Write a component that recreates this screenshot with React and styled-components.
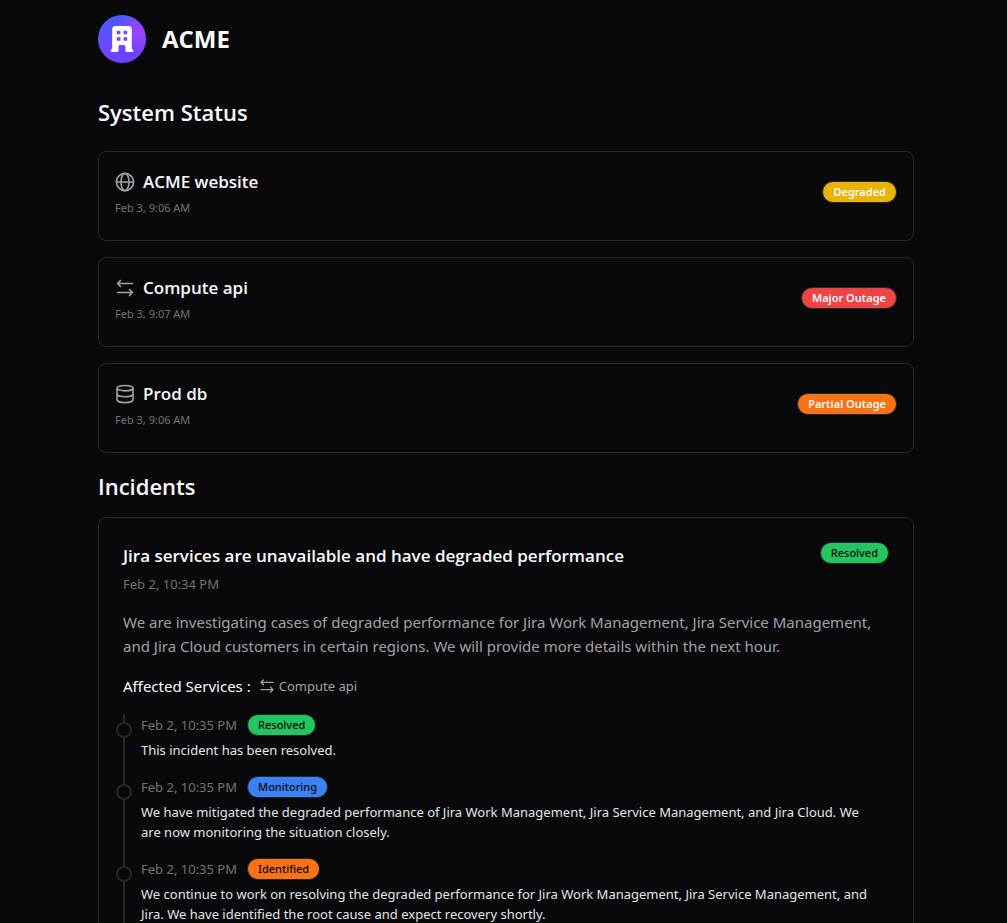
import React from "react";
import styled, { createGlobalStyle } from "styled-components";

const GlobalStyle = createGlobalStyle`
  *, *::before, *::after { box-sizing: border-box; }
  html, body, #root { height: 100%; }
  body {
    margin: 0;
    background: #09090b;
    color: #fafafa;
    font-family: "Segoe UI", "Noto Sans", "Open Sans", sans-serif;
    font-size: 15px;
    line-height: 24px;
  }
  h1, h2, h3 { font-family: "Segoe UI", "Open Sans", "Noto Sans", sans-serif; }
  h1, h2, h3, p, ol, ul { margin: 0; padding: 0; }
  ol, ul { list-style: none; }
`;

const Page = styled.main`
  height: 100%;
  overflow: hidden;
  padding: 15px 93px 0 98px;
`;

const Header = styled.header`
  display: flex;
  align-items: center;
  gap: 16px;
  margin-bottom: 33px;
`;

const Logo = styled.svg`
  width: 48px;
  height: 48px;
  flex: none;
`;

const Brand = styled.h1`
  font-size: 24px;
  line-height: 32px;
  font-weight: 700;
`;

const SectionTitle = styled.h2`
  font-size: 22px;
  line-height: 32px;
  font-weight: 600;
`;

const Services = styled.ul`
  display: grid;
  gap: 16px;
  margin: 23px 0 17px;
`;

const Service = styled.li`
  display: flex;
  justify-content: space-between;
  align-items: flex-start;
  padding: 16px 16px 20px;
  border: 1px solid #27272a;
  border-radius: 8px;
`;

const ServiceName = styled.h3`
  display: flex;
  align-items: center;
  gap: 8px;
  font-size: 17px;
  line-height: 28px;
  font-weight: 600;
`;

const Icon = styled.svg`
  width: ${(p) => p.$size}px;
  height: ${(p) => p.$size}px;
  flex: none;
  fill: none;
  stroke: #a1a1aa;
  stroke-linecap: round;
  stroke-linejoin: round;
`;

const Time = styled.time`
  display: block;
  color: #71717a;
  font-size: ${(p) => (p.$small ? 11 : 13)}px;
  line-height: ${(p) => (p.$small ? 24 : 20)}px;
`;

const tones = {
  yellow: "#eab308",
  red: "#ef4444",
  orange: "#f97316",
  green: "#22c55e",
  blue: "#3b82f6",
};

const Badge = styled.span`
  flex: none;
  padding: 1px 10px;
  margin-top: ${(p) => (p.$bright ? 13 : 0)}px;
  border: 1px solid #27272a;
  border-radius: 11px;
  background: ${(p) => tones[p.$tone]};
  color: ${(p) => (p.$bright ? "#fafafa" : "#09090b")};
  font-size: 11px;
  line-height: 18px;
  font-weight: ${(p) => (p.$bright ? 600 : 500)};
`;

const Incident = styled.article`
  margin-top: 15px;
  padding: 24px;
  border: 1px solid #27272a;
  border-radius: 8px;
`;

const IncidentHead = styled.div`
  display: flex;
  justify-content: space-between;
  align-items: flex-start;
`;

const IncidentTitle = styled.h3`
  margin-bottom: 4px;
  font-size: 17px;
  line-height: 28px;
  font-weight: 600;
`;

const Description = styled.p`
  margin: 16px 0;
  color: #a1a1aa;
`;

const Affected = styled.div`
  display: flex;
  align-items: center;
  gap: 8px;
`;

const AffectedService = styled.span`
  display: flex;
  align-items: center;
  gap: 4px;
  color: #a1a1aa;
  font-size: 13px;
`;

const Timeline = styled.ol`
  margin-top: 16px;
  border-left: 2px solid #27272a;
`;

const Update = styled.li`
  position: relative;
  padding: 0 12px 16px 16px;

  &::before {
    content: "";
    position: absolute;
    left: -9px;
    top: 8px;
    width: 16px;
    height: 16px;
    border: 2px solid #27272a;
    border-radius: 50%;
    background: #09090b;
  }
`;

const UpdateHead = styled.div`
  display: flex;
  align-items: center;
  gap: 10px;
  margin-bottom: 4px;
`;

const UpdateText = styled.p`
  color: #e4e4e7;
  font-size: 13px;
  line-height: 20px;
`;

const Globe = () => (
  <Icon viewBox="0 0 20 20" $size={20} strokeWidth="1.6" aria-hidden="true">
    <circle cx="10" cy="10" r="8.6" />
    <ellipse cx="10" cy="10" rx="4" ry="8.6" />
    <path d="M1.5 10h17" />
  </Icon>
);

const Arrows = ({ size = 20 }) => (
  <Icon viewBox="0 0 20 20" $size={size} strokeWidth="1.6" aria-hidden="true">
    <path d="M17.5 5.5H2.5M5.5 2.5 2.5 5.5 5.5 8.5M2.5 14.5h15M14.5 11.5l3 3-3 3" />
  </Icon>
);

const Database = () => (
  <Icon viewBox="0 0 20 20" $size={20} strokeWidth="1.6" aria-hidden="true">
    <ellipse cx="10" cy="4.2" rx="8" ry="2.7" />
    <path d="M2 4.2v11.6c0 1.6 3.6 2.8 8 2.8s8-1.2 8-2.8V4.2M2 10c0 1.6 3.6 2.8 8 2.8s8-1.2 8-2.8" />
  </Icon>
);

const services = [
  { name: "ACME website", time: "Feb 3, 9:06 AM", status: "Degraded", tone: "yellow", icon: Globe },
  { name: "Compute api", time: "Feb 3, 9:07 AM", status: "Major Outage", tone: "red", icon: Arrows },
  { name: "Prod db", time: "Feb 3, 9:06 AM", status: "Partial Outage", tone: "orange", icon: Database },
];

const updates = [
  { status: "Resolved", tone: "green", text: "This incident has been resolved." },
  {
    status: "Monitoring",
    tone: "blue",
    text: "We have mitigated the degraded performance of Jira Work Management, Jira Service Management, and Jira Cloud. We are now monitoring the situation closely.",
  },
  {
    status: "Identified",
    tone: "orange",
    text: "We continue to work on resolving the degraded performance for Jira Work Management, Jira Service Management, and Jira. We have identified the root cause and expect recovery shortly.",
  },
];

export default function App() {
  return (
    <>
      <GlobalStyle />
      <Page>
        <Header>
          <Logo viewBox="0 0 48 48" aria-hidden="true">
            <defs>
              <linearGradient id="base" x1="0" y1="0" x2="0.5" y2="1">
                <stop offset="0" stopColor="#3d63ff" />
                <stop offset="0.6" stopColor="#6c47ff" />
                <stop offset="1" stopColor="#7040ff" />
              </linearGradient>
              <radialGradient id="glow" cx="0.82" cy="0.35" r="0.45">
                <stop offset="0" stopColor="#a044ff" />
                <stop offset="1" stopColor="#a044ff" stopOpacity="0" />
              </radialGradient>
            </defs>
            <circle cx="24" cy="24" r="24" fill="url(#base)" />
            <circle cx="24" cy="24" r="24" fill="url(#glow)" />
            <path
              fill="#fff"
              fillRule="evenodd"
              d="M17.6 11h12.800a3.400 3.400 0 0 1 3.400 3.400V34a1.500 1.500 0 0 1 0 3h-5.300a1 1 0 0 1-1-1v-4.500a1.500 1.500 0 0 0-1.500-1.500h-4a1.500 1.500 0 0 0-1.500 1.500V36a1 1 0 0 1-1 1h-5.300a1.500 1.500 0 0 1 0-3V14.400a3.400 3.400 0 0 1 3.400-3.400ZM18.800 15.700v3.600h3.600v-3.600ZM25.600 15.700v3.600h3.600v-3.600ZM18.800 22.200v3.600h3.600v-3.600ZM25.600 22.200v3.600h3.600v-3.600Z"
            />
          </Logo>
          <Brand>ACME</Brand>
        </Header>

        <section>
          <SectionTitle>System Status</SectionTitle>
          <Services>
            {services.map(({ name, time, status, tone, icon: ServiceIcon }) => (
              <Service key={name}>
                <div>
                  <ServiceName>
                    <ServiceIcon />
                    {name}
                  </ServiceName>
                  <Time $small>{time}</Time>
                </div>
                <Badge $tone={tone} $bright>{status}</Badge>
              </Service>
            ))}
          </Services>
        </section>

        <section>
          <SectionTitle>Incidents</SectionTitle>
          <Incident>
            <IncidentHead>
              <div>
                <IncidentTitle>Jira services are unavailable and have degraded performance</IncidentTitle>
                <Time>Feb 2, 10:34 PM</Time>
              </div>
              <Badge $tone="green">Resolved</Badge>
            </IncidentHead>
            <Description>
              We are investigating cases of degraded performance for Jira Work Management, Jira Service Management, and
              Jira Cloud customers in certain regions. We will provide more details within the next hour.
            </Description>
            <Affected>
              <span>Affected Services :</span>
              <AffectedService>
                <Arrows size={16} />
                Compute api
              </AffectedService>
            </Affected>
            <Timeline>
              {updates.map(({ status, tone, text }) => (
                <Update key={status}>
                  <UpdateHead>
                    <Time>Feb 2, 10:35 PM</Time>
                    <Badge $tone={tone}>{status}</Badge>
                  </UpdateHead>
                  <UpdateText>{text}</UpdateText>
                </Update>
              ))}
            </Timeline>
          </Incident>
        </section>
      </Page>
    </>
  );
}
